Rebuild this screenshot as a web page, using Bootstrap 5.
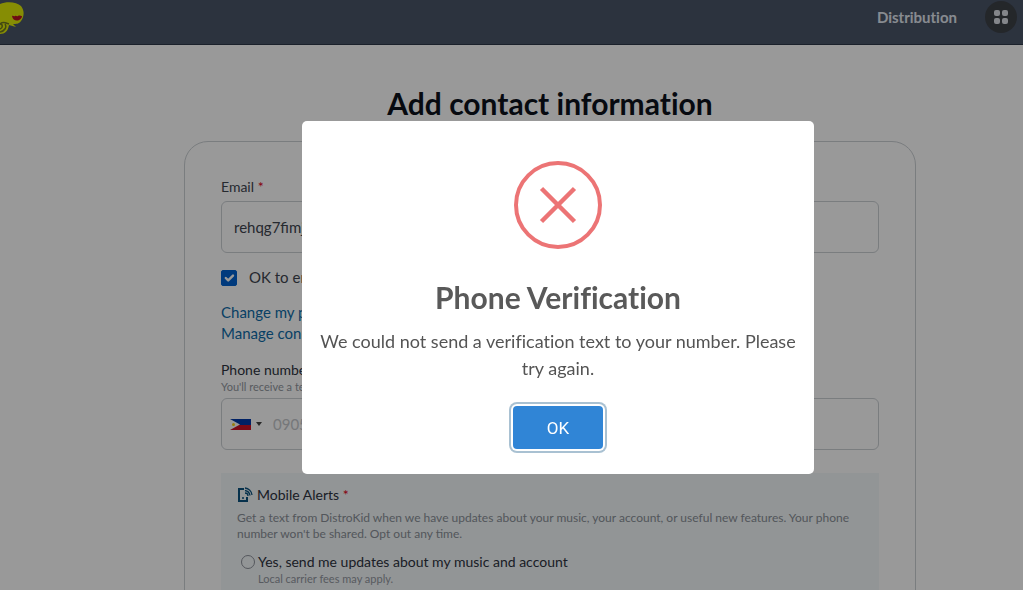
<!DOCTYPE html>
<html lang="en">
<head>
<meta charset="utf-8">
<meta name="viewport" content="width=device-width, initial-scale=1">
<title>Add contact information</title>
<link href="https://cdn.jsdelivr.net/npm/bootstrap@5.3.0/dist/css/bootstrap.min.css" rel="stylesheet">
<style>
  body { font-family: Lato, "Liberation Sans", sans-serif; font-size: 15px; color: #40454f; line-height: 21px; }
  h1, h2, a, .alert-text { font-variant-ligatures: none; }
  .topbar { height: 45px; background: #4a5568; border-bottom: 1px solid #2d3748; padding: 0 6px 10px 0; }
  .topbar a { color: #e2e8f0; font-weight: 700; }
  .apps-btn { width: 32px; height: 32px; background: #3d4147; border: 0; }
  .page-main { padding-left: 77px; }
  .page-title { font-size: 30px; line-height: 36px; font-weight: 700; color: #0d121c; margin: 40px 0 20px; }
  .form-panel { max-width: 732px; padding: 35px 36px; border: 1px solid #cbd0d4; border-radius: 24px; background: #fff; }
  .field-label { font-size: 14px; line-height: 20px; color: #40454f; }
  .req { color: #e00020; }
  .field { height: 52px; border: 1px solid #cbd0d4; border-radius: 6px; font-size: 15px; color: #40454f; padding: 0 12px; background: #fff; }
  .field input { font-size: 15px; }
  .field input::placeholder { color: #c4c7cb; opacity: 1; }
  .check-row { margin: 14px 0; }
  .form-check-input.email-check { width: 16px; height: 16px; margin: 0; border-radius: 2px; background-size: 16px; }
  .email-check:checked { background-color: #0062d0; border-color: #0062d0; }
  .account-links a { color: #0e6ba8; }
  .hint { font-size: 11px; line-height: 14px; color: #9297a0; }
  .alerts { background: #f4f8fa; padding: 12px 16px 32px; margin: 23px 0 0; }
  .alerts-desc { font-size: 12px; line-height: 16px; color: #8a9098; margin: 5px 0 9px; }
  .choice { color: #2d3340; }
  .choice-text { font-size: 14px; }
  .form-check-input.choice-radio { width: 14px; height: 14px; margin: 4px 3px 0 0; border-color: #8d929b; background-color: transparent; }
  .shade { background: rgba(0, 0, 0, .4); padding-left: 93px; }
  .alert-dialog { max-width: 512px; }
  .alert-box { border: 0; border-radius: 5px; padding: 40px 16px 25px; margin-top: 5px; text-align: center; }
  .alert-title { font-size: 30px; line-height: 36px; font-weight: 700; color: #595959; margin: 30px 0 13px; }
  .alert-text { font-size: 18px; line-height: 27px; color: #545454; }
  .ok-btn, .ok-btn:hover { width: 90px; height: 43px; background: #3085d6; color: #fff; border: 0; border-radius: 4px; font: 17px Roboto, sans-serif; box-shadow: 0 0 0 2px #fff, 0 0 0 4px #a9c1d2; }
</style>
</head>
<body class="modal-open overflow-hidden">

<header class="topbar d-flex align-items-center justify-content-between">
  <svg width="26" height="34" viewBox="0 0 26 34" role="img" aria-label="Home">
    <path d="M0 4C7 1 17 2 21 6c4 5 3 11 0 15-2 3-5 3-8 3l3 3-7-2c-1 6-4 9-9 9V4z" fill="#e0ec08"/>
    <path d="M0 32c5-1 7-5 5-8M0 29c3-1 3-5 0-5M0 24c3-3 6-1 9 0" fill="none" stroke="#6f7820" stroke-width="1.500"/>
    <path d="M12 16c1-1 2 1 3 0s2 1 3 0 3 0 4 0c0 5-9 7-10 0z" fill="#b81420"/>
  </svg>
  <nav class="d-flex align-items-center gap-4" aria-label="Main">
    <a href="#" class="text-decoration-none me-1">Distribution</a>
    <button type="button" class="apps-btn rounded-circle p-0 d-flex align-items-center justify-content-center" aria-label="Apps">
      <svg width="14" height="14" viewBox="0 0 14 14" fill="#dce0e6"><rect width="6" height="6" rx="2"/><rect x="8" width="6" height="6" rx="2"/><rect y="8" width="6" height="6" rx="2"/><rect x="8" y="8" width="6" height="6" rx="2"/></svg>
    </button>
  </nav>
</header>

<main class="page-main">
  <h1 class="page-title text-center">Add contact information</h1>
  <form class="form-panel mx-auto">
    <label for="email" class="field-label d-block mb-1">Email <span class="req">*</span></label>
    <input id="email" type="text" class="form-control field" value="rehqg7fimj">

    <div class="check-row d-flex align-items-center">
      <input id="okmail" type="checkbox" class="form-check-input email-check" checked>
      <label for="okmail" class="ms-2 ps-1">OK to email me</label>
    </div>

    <div class="account-links d-flex flex-column align-items-start">
      <a href="#" class="text-decoration-none">Change my phone</a>
      <a href="#" class="text-decoration-none">Manage conn…</a>
    </div>

    <label for="phone" class="field-label choice d-block mt-3">Phone number <span class="req">*</span></label>
    <div class="hint mb-1">You'll receive a text to verify</div>
    <div class="field d-flex align-items-center px-2">
      <button type="button" class="btn border-0 p-0 d-flex align-items-center gap-1" aria-label="Country: Philippines">
        <svg width="21" height="11" viewBox="0 0 21 11"><path d="M0 0h21v6H0z" fill="#0038a8"/><path d="M0 6h21v5H0z" fill="#ce1126"/><path d="M0 0l10 5.500L0 11z" fill="#fff"/><circle cx="3.500" cy="5.500" r="1.500" fill="#fcd116"/></svg>
        <svg width="8" height="4" viewBox="0 0 8 4"><path d="M1 0h6L4 4z" fill="#444"/></svg>
      </button>
      <input id="phone" type="tel" class="border-0 flex-grow-1 ms-2" placeholder="0905 123 4567">
    </div>

    <section class="alerts">
      <div class="d-flex align-items-center gap-1">
        <svg width="16" height="16" viewBox="0 0 16 16" fill="none" stroke="#0b527f"><path d="M7 2H2v12h8v-4" stroke-width="2"/><path d="M8 6a3 3 0 0 1 3 3M8 3.500a6 6 0 0 1 5 5M8 1a8 8 0 0 1 7 7" stroke-width="1.300"/><path d="M5 11h2" stroke-width="1.500"/></svg>
        <span class="field-label choice">Mobile Alerts <span class="req">*</span></span>
      </div>
      <p class="alerts-desc">Get a text from DistroKid when we have updates about your music, your account, or useful new features. Your phone number won't be shared. Opt out any time.</p>
      <div class="d-flex ps-1">
        <input id="yes" type="radio" name="updates" class="form-check-input choice-radio flex-shrink-0">
        <label for="yes" class="choice choice-text">Yes, send me updates about my music and account<span class="hint d-block">Local carrier fees may apply.</span></label>
      </div>
    </section>
  </form>
</main>

<div class="modal d-block shade overflow-hidden" role="dialog" aria-modal="true" aria-labelledby="alertTitle">
  <div class="modal-dialog modal-dialog-centered alert-dialog my-0 mx-auto min-vh-100">
    <div class="modal-content alert-box">
      <svg class="mx-auto" width="88" height="88" viewBox="0 0 88 88" fill="none" stroke="#ec7475"><circle cx="44" cy="44" r="42" stroke-width="4"/><path d="M27.500 27.500l33 33M60.500 27.500l-33 33" stroke-width="4.500"/></svg>
      <h2 id="alertTitle" class="alert-title">Phone Verification</h2>
      <p class="alert-text mb-4">We could not send a verification text to your number. Please try again.</p>
      <button type="button" class="btn ok-btn mx-auto">OK</button>
    </div>
  </div>
</div>

<script src="https://cdn.jsdelivr.net/npm/bootstrap@5.3.0/dist/js/bootstrap.bundle.min.js"></script>
</body>
</html>
